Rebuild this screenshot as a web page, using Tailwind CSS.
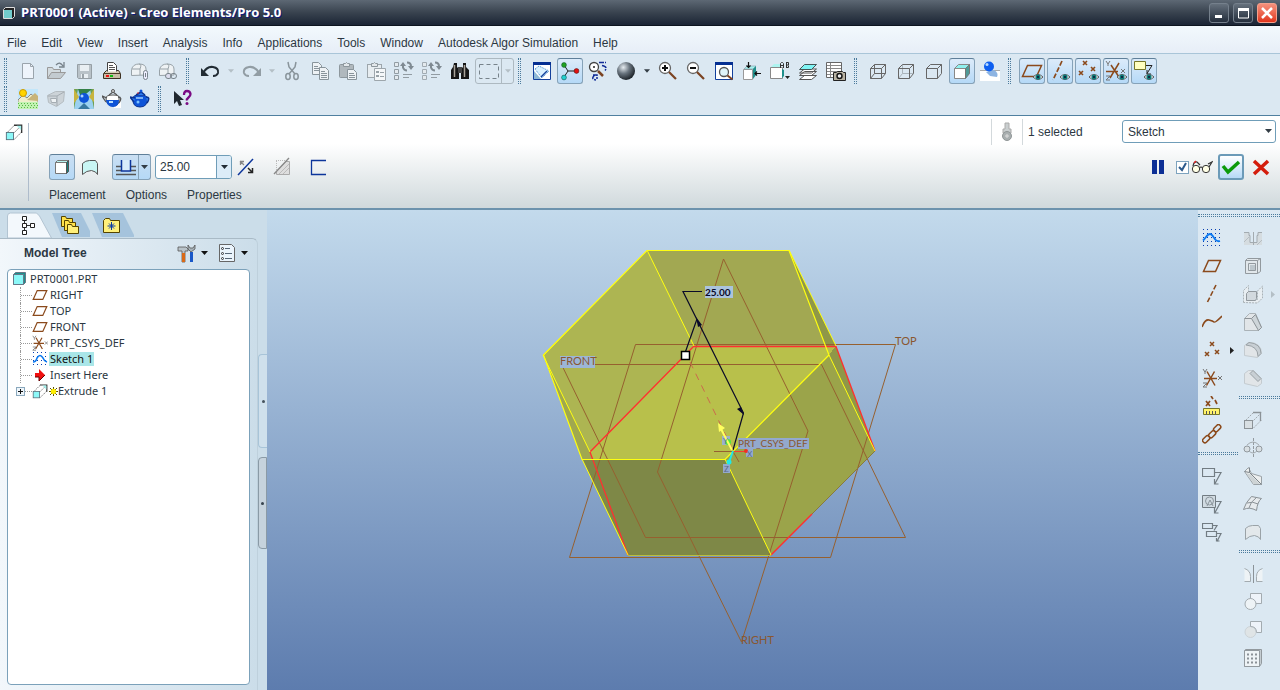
<!DOCTYPE html>
<html lang="en">
  <head>
    <meta charset="UTF-8" />
    <meta name="viewport" content="width=device-width, initial-scale=1.0" />
    <title>PRT0001 (Active) - Creo Elements/Pro 5.0</title>
    <script src="https://cdn.jsdelivr.net/npm/@tailwindcss/browser@4"></script>
  </head>
  <body class="flex h-screen flex-col overflow-hidden bg-[#dbe8f2] font-['Liberation_Sans',Arial,sans-serif] text-xs text-[#2b3742]">
    <!-- Shared icons -->
    <svg class="hidden">
      <symbol id="down" viewBox="0 0 7 4"><path d="M0 0h7L3.500 4z" fill="currentColor" /></symbol>
      <symbol id="eye" viewBox="0 0 10 6">
        <path d="M0 3Q5 -2 10 3Q5 8 0 3" fill="#fff" stroke="#555" />
        <circle cx="5" cy="3" r="2.600" fill="#0d7a78" /><circle cx="5" cy="3" r="1" fill="#113" />
      </symbol>
      <symbol id="plane" viewBox="0 0 20 20"><path d="M6.500 4.500h12l-5 11h-12z" fill="none" stroke="#8b4a1c" stroke-width="1.500" /></symbol>
      <symbol id="csys" viewBox="0 0 20 20">
        <path d="M2 10.500h13M5 3.500l8 14M12.500 3.500l-8 14" stroke="#8b4a1c" stroke-width="1.500" />
        <path d="M1 1l2 3 2-3M3 4v2M16 8l4 4M20 8l-4 4M1 15h4l-4 4h4" fill="none" stroke="#777" />
      </symbol>
      <symbol id="sketch" viewBox="0 0 20 20">
        <path d="M1 1.500h18M1 5.500h18M1 9.500h18M1 13.500h18M1 17.500h18" stroke="#0a3fb0" stroke-dasharray="1 3" />
        <path d="M1 12.500C4 10 5 6 8 6c4 0 4 9 10 7" fill="none" stroke="#0a78f0" stroke-width="1.800" />
      </symbol>
      <symbol id="extrude" viewBox="0 0 20 20">
        <path d="M2.500 10.500l8-8M10.500 18l8-8M10.500 10.500l8-8" stroke="#666" stroke-dasharray="2 1" />
        <path d="M10 2.500h8.500V11" fill="none" stroke="#333" stroke-width="1.500" />
        <path d="M13 3h5v5z" fill="#a5f2ee" />
        <rect x="1.500" y="10.500" width="8" height="8" fill="#8cf8f8" stroke="#55707c" />
      </symbol>
      <symbol id="points" viewBox="0 0 20 20">
        <path d="M8 2l4 4M12 2l-4 4M3 12l4 4M7 12l-4 4M13 10l4 4M17 10l-4 4" stroke="#8b4a1c" stroke-width="1.500" />
      </symbol>
    </svg>

    <!-- Title bar -->
    <header class="flex h-[26px] shrink-0 items-center border-b border-[#0d1520] bg-linear-to-b from-[#5d6874] via-[#39434f] to-[#1b2535] px-[3px]">
      <svg class="size-3" viewBox="0 0 12 12"><path d="M.5 2.500L2.500.5h9v9l-2 2h-9z" fill="#222" stroke="#ddd" /><path d="M1 3h8v8H1z" fill="#72cccc" /></svg>
      <h1 class="ml-[6px] font-['Open_Sans',sans-serif] text-[13px] font-bold text-white [text-shadow:1px_1px_0_#101a80]">PRT0001 (Active) - Creo Elements/Pro 5.0</h1>
      <div class="ml-auto flex gap-1">
        <button aria-label="Minimize" class="grid size-5 place-items-center rounded-[3px] border border-[#75808c] bg-linear-to-b from-[#66717d] to-[#252f3d]"><svg class="size-4" viewBox="0 0 16 16"><path d="M4 10h7v3H4z" fill="#fff" /></svg></button>
        <button aria-label="Maximize" class="grid size-5 place-items-center rounded-[3px] border border-[#75808c] bg-linear-to-b from-[#66717d] to-[#252f3d]"><svg class="size-4" viewBox="0 0 16 16"><path d="M3.500 3v10h10V3" fill="none" stroke="#fff" /><path d="M3 3h11v3H3z" fill="#fff" /></svg></button>
        <button aria-label="Close" class="grid size-5 place-items-center rounded-[3px] border border-[#f4a08c] bg-linear-to-b from-[#f5907c] to-[#e03218]"><svg class="size-4" viewBox="0 0 16 16"><path d="M3 3l10 10M13 3L3 13" stroke="#fff" stroke-width="2.500" /></svg></button>
      </div>
    </header>

    <!-- Menu bar -->
    <nav class="flex h-7 shrink-0 items-center gap-[15px] border-b border-[#a9c5d8] bg-linear-to-b from-[#f2f9fd] to-[#e7eef7] px-[7px] pt-[6px]">
      <button>File</button>
      <button>Edit</button>
      <button>View</button>
      <button>Insert</button>
      <button>Analysis</button>
      <button>Info</button>
      <button>Applications</button>
      <button>Tools</button>
      <button>Window</button>
      <button>Autodesk Algor Simulation</button>
      <button>Help</button>
    </nav>

    <!-- Toolbars -->
    <div class="h-[62px] shrink-0 border-b border-[#4f80a0] bg-[#dbe8f2] pt-[3px]">
      <div class="flex h-7 items-center">
        <div class="flex w-[14px] justify-start pl-1"><i class="h-[26px] w-[3px] border-x border-dotted border-[#4a7a9c]"></i></div>
        <button aria-label="New" class="grid size-7 place-items-center"><svg class="size-5" viewBox="0 0 20 20"><path d="M4.500 2.500h8l3 3v12h-11z" fill="#eef4fb" stroke="#9aa4ac" /><path d="M12.500 2.500v3h3" fill="none" stroke="#9aa4ac" /></svg></button>
        <button aria-label="Open" class="grid size-7 place-items-center"><svg class="size-5" viewBox="0 0 20 20"><path d="M1.500 17.500v-11h5l1 2h7v3" fill="#d2dade" stroke="#999" /><path d="M1.500 17.500l4-6h14l-5 6z" fill="#c3cbd0" stroke="#999" /><path d="M10 4Q14 0 17 5M18 1v5h-5" fill="none" stroke="#77828a" stroke-width="1.300" /></svg></button>
        <button aria-label="Save" class="grid size-7 place-items-center"><svg class="size-5" viewBox="0 0 20 20"><path d="M3.500 3.500h14v14h-13l-1-1z" fill="#b9c2c8" stroke="#969fa5" /><path d="M6 4h9v6H6zM7 13h7v4H7z" fill="#e9eff3" /><path d="M8 13h2v4H8z" fill="#9aa3a9" /></svg></button>
        <button aria-label="Print" class="grid size-7 place-items-center"><svg class="size-5" viewBox="0 0 20 20"><path d="M1.500 12.500l3-3h12l2 3v5h-17z" fill="#d8cdb6" stroke="#3c3022" /><path d="M5.500 10.500v-9h6l3 3v6" fill="#fff" stroke="#444" /><path d="M7 4.500h4M7 6.500h6M7 8.500h6" stroke="#555" /><path d="M2 12h16v5H2z" fill="#c9bca4" /><path d="M2 12.500h16" stroke="#4d3b26" /><path d="M4 14h3v2H4z" fill="#e11" /><path d="M8 14h3v2H8z" fill="#1b1" /></svg></button>
        <button aria-label="Send as attachment" class="grid size-7 place-items-center"><svg class="size-5" viewBox="0 0 20 20"><path d="M1.500 14.500v-6Q3 3 9 3q7 0 7 5v6z" fill="#eef2f4" stroke="#98a2a8" /><path d="M2 8h8v6M10 8Q12 3 9 3" fill="none" stroke="#98a2a8" /><rect x="13.500" y="9.500" width="4" height="9" rx="2" fill="#eef" stroke="#78838a" /><path d="M15.500 12v4" stroke="#78838a" /></svg></button>
        <button aria-label="Send as link" class="grid size-7 place-items-center"><svg class="size-5" viewBox="0 0 20 20"><path d="M1.500 14.500v-6Q3 3 9 3q7 0 7 5v6z" fill="#eef2f4" stroke="#98a2a8" /><path d="M2 8h8v6M10 8Q12 3 9 3" fill="none" stroke="#98a2a8" /><rect x="7.500" y="12.500" width="6" height="5" rx="2.500" fill="#dde" stroke="#78838a" /><rect x="12.500" y="12.500" width="6" height="5" rx="2.500" fill="none" stroke="#78838a" /></svg></button>
        <div class="flex w-[14px] justify-start pl-1"><i class="h-[26px] w-[3px] border-x border-dotted border-[#4a7a9c]"></i></div>
        <button aria-label="Undo" class="grid size-7 place-items-center"><svg class="size-5" viewBox="0 0 20 20"><path d="M3 12Q7 5 13 6q6 1 5 6-1 3-5 3" fill="none" stroke="#222c34" stroke-width="2" /><path d="M1 7v8h8z" fill="#222c34" /></svg></button>
        <button aria-label="Undo list" class="grid h-7 w-[14px] place-items-center text-[#b4bfc6]"><svg class="h-1 w-[6px]"><use href="#down" /></svg></button>
        <button aria-label="Redo" class="grid size-7 place-items-center"><svg class="size-5" viewBox="0 0 20 20"><path d="M17 12Q13 5 7 6q-6 1-5 6 1 3 5 3" fill="none" stroke="#929da4" stroke-width="2" /><path d="M19 7v8h-8z" fill="#929da4" /></svg></button>
        <button aria-label="Redo list" class="grid h-7 w-3 place-items-center text-[#b4bfc6]"><svg class="h-1 w-[6px]"><use href="#down" /></svg></button>
        <button aria-label="Cut" class="grid size-7 place-items-center"><svg class="size-5" viewBox="0 0 20 20"><path d="M6 1l1 5 6 7M14 1l-1 5-6 7" fill="none" stroke="#89949b" stroke-width="1.500" /><ellipse cx="6" cy="15.500" rx="2.200" ry="3" fill="none" stroke="#89949b" stroke-width="1.500" /><ellipse cx="14" cy="15.500" rx="2.200" ry="3" fill="none" stroke="#89949b" stroke-width="1.500" /></svg></button>
        <button aria-label="Copy" class="grid size-7 place-items-center"><svg class="size-5" viewBox="0 0 20 20"><path d="M2.500 1.500h6l3 3v9h-9z" fill="#eef2f5" stroke="#89949b" /><path d="M4 5.500h4M4 7.500h6M4 9.500h6" stroke="#89949b" /><path d="M9.500 6.500h6l3 3v9h-9z" fill="#eef2f5" stroke="#89949b" /><path d="M11 10.500h4M11 12.500h6M11 14.500h6M11 16.500h6" stroke="#89949b" /></svg></button>
        <button aria-label="Paste" class="grid size-7 place-items-center"><svg class="size-5" viewBox="0 0 20 20"><rect x="1.500" y="3.500" width="14" height="13" rx="1" fill="#b0b8bd" stroke="#8d979d" /><path d="M5.500 5.500v-3h2l1-1 1 1h2v3z" fill="#e3e8eb" stroke="#8d979d" /><path d="M9.500 8.500h6l3 3v7h-9z" fill="#eef2f5" stroke="#89949b" /><path d="M11 12.500h5M11 14.500h6M11 16.500h6" stroke="#89949b" /></svg></button>
        <button aria-label="Paste special" class="grid size-7 place-items-center"><svg class="size-5" viewBox="0 0 20 20"><rect x="1.500" y="3.500" width="14" height="13" fill="#e7edf1" stroke="#9da6ac" /><path d="M5.500 5.500v-3h2l1-1 1 1h2v3z" fill="#e3e8eb" stroke="#8d979d" /><path d="M8.500 7.500h11v12h-11z" fill="#f4f7f9" stroke="#9da6ac" /><path d="M10 10h3v2h-3zM10 14h3v2h-3z" fill="#98a2a8" /><path d="M14 11.500h4M14 15.500h4" stroke="#98a2a8" /></svg></button>
        <button aria-label="Regenerate" class="grid size-7 place-items-center"><svg class="size-5" viewBox="0 0 20 20"><path d="M.5 1.500h4v4h-4zM.5 8.500h4v4h-4zM.5 14.500h4v4h-4z" fill="#e4eaee" stroke="#929ca3" /><path d="M9 4.500v2q1 3 4 3M13 1.500q4 0 4 4" fill="none" stroke="#7f8a92" stroke-width="2" /><path d="M6 5h6L9 1zM14 5h6l-3 4z" fill="#7f8a92" /><path d="M9 13.500h9M9 16.500h6" stroke="#929ca3" /></svg></button>
        <button aria-label="Regenerate manager" class="grid size-7 place-items-center"><svg class="size-5" viewBox="0 0 20 20"><path d="M.5 1.500h4v4h-4zM.5 8.500h4v4h-4zM.5 14.500h4v4h-4z" fill="#e4eaee" stroke="#a1abb2" /><path d="M9 4.500v2q1 3 4 3M13 1.500q4 0 4 4" fill="none" stroke="#7f8a92" stroke-width="2" /><path d="M6 5h6L9 1zM14 5h6l-3 4z" fill="#7f8a92" /><path d="M9 13.500h9M9 16.500h6" stroke="#929ca3" /></svg></button>
        <button aria-label="Find" class="grid size-7 place-items-center"><svg class="size-5" viewBox="0 0 20 20"><path d="M4 2h3v4l2 2v10H1V9l2-3zM13 2h3v4l3 3v9h-8V8l2-2z" fill="#161616" /><path d="M8 6h4v6H8z" fill="#444" /><path d="M4.500 4v12M14.500 4v12" stroke="#aaa49a" stroke-width="1.500" /></svg></button>
        <div class="ml-px flex h-[26px] w-[39px] rounded-[3px] border border-[#adb9c1]">
          <button aria-label="Select region" class="grid flex-1 place-items-center border-r border-[#adb9c1]"><svg class="h-[15px] w-5" viewBox="0 0 20 15"><path d="M.5 .5h19v14H.5z" fill="none" stroke="#77838b" stroke-dasharray="4 3" /></svg></button>
          <button aria-label="Select filter" class="grid w-[11px] place-items-center text-[#b4bfc6]"><svg class="h-1 w-[6px]"><use href="#down" /></svg></button>
        </div>
        <div class="flex w-[14px] justify-start pl-1"><i class="h-[26px] w-[3px] border-x border-dotted border-[#4a7a9c]"></i></div>
        <button aria-label="Repaint" class="grid size-7 place-items-center"><svg class="size-5" viewBox="0 0 20 20"><path d="M1.500 1.500h17v17h-17z" fill="#fff" stroke="#12409c" /><path d="M1 1h18v3H1z" fill="#052f92" /><path d="M3 8l4-3 10 5-7 7z" fill="#d9f1ff" stroke="#3b86c8" stroke-dasharray="1 1" /><path d="M9 16l6-6" stroke="#12409c" stroke-width="1.500" /><path d="M2 10l7 8H2z" fill="#8fb9d6" /></svg></button>
        <button aria-label="Spin center" aria-pressed="true" class="m-px grid size-[26px] place-items-center rounded-[3px] border border-[#86a2b8] border-t-[#5f7f99] bg-linear-to-b from-[#dcebfa] to-[#b5d9f7]"><svg class="size-5" viewBox="0 0 20 20"><path d="M4 4l4 6-4 6M8 10h8" fill="none" stroke="#222" /><circle cx="4" cy="4" r="2.400" fill="#21a321" stroke="#153" stroke-width=".6" /><circle cx="16.500" cy="10" r="2.400" fill="#e21212" stroke="#511" stroke-width=".6" /><circle cx="4" cy="16.500" r="2.400" fill="#22d0d0" stroke="#155" stroke-width=".6" /></svg></button>
        <button aria-label="Orient mode" class="grid size-7 place-items-center"><svg class="size-5" viewBox="0 0 20 20"><circle cx="6" cy="6" r="4.500" fill="#fff" stroke="#444" stroke-width="1.300" /><circle cx="6" cy="6" r="1" fill="#222" /><path d="M10 10l5 5" stroke="#7b4322" stroke-width="2.500" /><path d="M11 1.500h7M14 4.500q6 1 3 5M7 14q-5 4 1 5M5 14h4v4" fill="none" stroke="#102b96" stroke-width="1.500" stroke-dasharray="5 1" /></svg></button>
        <button aria-label="Appearance gallery" class="grid size-7 place-items-center"><svg class="size-5" viewBox="0 0 20 20"><defs><radialGradient id="ball" cx=".35" cy=".3" r=".7"><stop stop-color="#e6ecf1" /><stop offset=".5" stop-color="#68737d" /><stop offset="1" stop-color="#20272d" /></radialGradient></defs><circle cx="10" cy="10" r="9" fill="url(#ball)" /></svg></button>
        <button aria-label="Appearance list" class="grid h-7 w-[14px] place-items-center text-[#333d45]"><svg class="h-1 w-[6px]"><use href="#down" /></svg></button>
        <button aria-label="Zoom in" class="grid size-7 place-items-center"><svg class="size-5" viewBox="0 0 20 20"><circle cx="7" cy="7" r="5.500" fill="#fff" stroke="#666" stroke-width="1.300" /><path d="M4 7h6M7 4v6" stroke="#111" stroke-width="2" /><path d="M11 11l7 7" stroke="#7b4322" stroke-width="2.200" /></svg></button>
        <button aria-label="Zoom out" class="grid size-7 place-items-center"><svg class="size-5" viewBox="0 0 20 20"><circle cx="7" cy="7" r="5.500" fill="#fff" stroke="#666" stroke-width="1.300" /><path d="M4 7h6" stroke="#111" stroke-width="2" /><path d="M11 11l7 7" stroke="#7b4322" stroke-width="2.200" /></svg></button>
        <button aria-label="Refit" class="grid size-7 place-items-center"><svg class="size-5" viewBox="0 0 20 20"><path d="M1.500 1.500h17v17h-17z" fill="#fff" stroke="#12409c" /><path d="M1 1h18v3H1z" fill="#052f92" /><circle cx="10" cy="11" r="4.500" fill="#dff4fa" stroke="#555" stroke-width="1.300" /><path d="M13.500 14.500l5 4" stroke="#7b4322" stroke-width="2" /></svg></button>
        <button aria-label="Reorient view" class="grid size-7 place-items-center"><svg class="size-5" viewBox="0 0 20 20"><path d="M1.500 8.500h9v10h-9z" fill="#fff" stroke="#999" /><path d="M2 8l3-3h9l-3 3z" fill="#a5f2ee" stroke="#89a" stroke-width=".6" /><path d="M11 8l3-3v9l-3 4z" fill="#1f8f8b" /><path d="M6.500 1v6M4.500 4.500l2 2 2-2M19 12.500h-6M15 10.500l-2 2 2 2" fill="none" stroke="#111" stroke-width="1.200" /></svg></button>
        <button aria-label="Saved view list" class="grid size-7 place-items-center"><svg class="size-5" viewBox="0 0 20 20"><path d="M.5 6.500h12v11H.5z" fill="#fff" stroke="#888" /><path d="M1 6l3-3h6v3z" fill="#aef4f0" /><path d="M12 8l2 1v6l-2 2z" fill="#1f8f8b" /><path d="M10.500 7V2.500l1-1h1l1 1V7M10.500 4.500h3M16.500 1v5.500M16 1.500h2.500v2.500h-2M18.500 4.500v2H16" fill="none" stroke="#333" /><path d="M15 15h5l-2.500 3z" fill="#222" /></svg></button>
        <button aria-label="Layers" class="grid size-7 place-items-center"><svg class="size-5" viewBox="0 0 20 20"><path d="M1.500 18.500l5-4h12l-5 4zM1.500 14.500l5-4h12l-5 4zM1.500 12l5-4h12l-5 4z" fill="#fff" stroke="#555" /><path d="M1.500 8.500l5-5h12l-5 5z" fill="#7ff4f4" stroke="#455" /></svg></button>
        <button aria-label="View manager" class="grid size-7 place-items-center"><svg class="size-5" viewBox="0 0 20 20"><path d="M.5 1.500h15v15H.5z" fill="#fff" stroke="#666" /><path d="M1 4.500h14M1 7.500h14M1 10.500h14M1 13.500h14M4.500 2v14" stroke="#888" /><path d="M7.500 11.500h3l1-1h5l1 1h2v8h-12z" fill="#b8b2a2" stroke="#222" /><circle cx="13.500" cy="15" r="2.500" fill="#eee" stroke="#111" stroke-width="1.400" /></svg></button>
        <div class="flex w-[14px] justify-start pl-1"><i class="h-[26px] w-[3px] border-x border-dotted border-[#4a7a9c]"></i></div>
        <button aria-label="Wireframe" class="grid size-7 place-items-center"><svg class="size-5" viewBox="0 0 20 20"><path d="M2.500 7.500h11v10h-11zM6.500 3.500h11v9h-11zM2.500 7.500l4-4M13.500 7.500l4-4M2.500 17.500l4-5M13.500 17.500l4-5" fill="none" stroke="#666" /></svg></button>
        <button aria-label="Hidden line" class="grid size-7 place-items-center"><svg class="size-5" viewBox="0 0 20 20"><path d="M6.500 3.500v9h11M2.500 17.500l4-5" fill="none" stroke="#aab4bb" /><path d="M2.500 7.500h11v10h-11zM2.500 7.500l4-4h11v9l-4 5M13.500 7.500l4-4" fill="none" stroke="#666" /></svg></button>
        <button aria-label="No hidden" class="grid size-7 place-items-center"><svg class="size-5" viewBox="0 0 20 20"><path d="M2.500 7.500h11v10h-11zM2.500 7.500l4-4h11v9l-4 5M13.500 7.500l4-4" fill="none" stroke="#666" /></svg></button>
        <button aria-label="Shading" aria-pressed="true" class="m-px grid size-[26px] place-items-center rounded-[3px] border border-[#86a2b8] border-t-[#5f7f99] bg-linear-to-b from-[#dcebfa] to-[#b5d9f7]"><svg class="size-5" viewBox="0 0 20 20"><path d="M2.500 7.500h11v10h-11z" fill="#fff" stroke="#888" /><path d="M2.500 7.500l4-4h11l-4 4z" fill="#8ff0ee" stroke="#888" /><path d="M13.500 7.500l4-4v9l-4 5z" fill="#4f9a96" stroke="#777" /></svg></button>
        <button aria-label="Enhanced realism" class="grid size-7 place-items-center"><svg class="size-5" viewBox="0 0 20 20"><path d="M0 9h20v11H0z" fill="#fff" /><path d="M0 9.500h20" stroke="#aaa" /><path d="M6 11l8-2q5 3 3 7l-7-1z" fill="#8db4e2" /><circle cx="9" cy="5.500" r="5" fill="#0d5ff0" /><circle cx="7" cy="3.500" r="1.500" fill="#b7dcff" /></svg></button>
        <div class="flex w-[14px] justify-start pl-1"><i class="h-[26px] w-[3px] border-x border-dotted border-[#4a7a9c]"></i></div>
        <button aria-label="Plane display" aria-pressed="true" class="m-px grid size-[26px] place-items-center rounded-[3px] border border-[#86a2b8] border-t-[#5f7f99] bg-linear-to-b from-[#dcebfa] to-[#b5d9f7]"><svg class="size-[22px]" viewBox="0 0 22 22"><path d="M6.500 5.500h14l-5 11h-14z" fill="none" stroke="#8b4a1c" stroke-width="1.500" /><use href="#eye" x="12" y="14" width="10" height="6" /></svg></button>
        <button aria-label="Axis display" aria-pressed="true" class="m-px grid size-[26px] place-items-center rounded-[3px] border border-[#86a2b8] border-t-[#5f7f99] bg-linear-to-b from-[#dcebfa] to-[#b5d9f7]"><svg class="size-[22px]" viewBox="0 0 22 22"><path d="M13 1L4 20" stroke="#8b4a1c" stroke-width="1.700" stroke-dasharray="5 2" /><use href="#eye" x="11" y="14" width="10" height="6" /></svg></button>
        <button aria-label="Point display" aria-pressed="true" class="m-px grid size-[26px] place-items-center rounded-[3px] border border-[#86a2b8] border-t-[#5f7f99] bg-linear-to-b from-[#dcebfa] to-[#b5d9f7]"><svg class="size-[22px]" viewBox="0 0 22 22"><path d="M6 1l4 4M10 1L6 5M2 11l4 4M6 11l-4 4M14 7l4 4M18 7l-4 4" stroke="#8b4a1c" stroke-width="1.600" /><use href="#eye" x="12" y="14" width="10" height="6" /></svg></button>
        <button aria-label="Csys display" aria-pressed="true" class="m-px grid size-[26px] place-items-center rounded-[3px] border border-[#86a2b8] border-t-[#5f7f99] bg-linear-to-b from-[#dcebfa] to-[#b5d9f7]"><svg class="size-[22px]" viewBox="0 0 22 22"><path d="M1 11.500h12M6 5l8 12M14 3L5 18" stroke="#8b4a1c" stroke-width="1.500" /><path d="M1 1l2 3 2-3M3 4v2M16 9l4 4M20 9l-4 4M1 16h4l-4 4h4" fill="none" stroke="#777" /><use href="#eye" x="12" y="14" width="10" height="6" /></svg></button>
        <button aria-label="Annotation display" aria-pressed="true" class="m-px grid size-[26px] place-items-center rounded-[3px] border border-[#86a2b8] border-t-[#5f7f99] bg-linear-to-b from-[#dcebfa] to-[#b5d9f7]"><svg class="size-[22px]" viewBox="0 0 22 22"><path d="M1.500 1.500h11v8h-11z" fill="#ffffc0" stroke="#77772a" /><path d="M13 5.500h6l-5 8M14 10v4h4" fill="none" stroke="#222" /><use href="#eye" x="11" y="14" width="10" height="6" /></svg></button>
      </div>
      <div class="flex h-7 items-center">
        <div class="flex w-[14px] justify-start pl-1"><i class="h-[26px] w-[3px] border-x border-dotted border-[#4a7a9c]"></i></div>
        <button aria-label="Scene" class="grid size-7 place-items-center"><svg class="size-5" viewBox="0 0 20 20"><path d="M0 0h20v20H0z" fill="#c2e6fa" /><path d="M0 11l5-5 4 3 4-4 7 6v3H0z" fill="#eeeecc" stroke="#888" /><path d="M9 11l8-7 3 3v5z" fill="#c8b478" /><circle cx="5" cy="4" r="3.500" fill="#ffd400" stroke="#c90" /><path d="M0 13h20v7H0z" fill="#c2f2b2" /><path d="M0 14.500h20M1 16.500h19M0 18.500h20" stroke="#58b848" stroke-dasharray="1 2" /></svg></button>
        <button aria-label="Room" class="grid size-7 place-items-center"><svg class="size-5" viewBox="0 0 20 20"><path d="M1.500 6.500l8-4h9l-1 10-7 5-8-4z" fill="#ccd3d8" stroke="#b4bcc1" /><path d="M2 7h9l7-4M11 7v10" fill="none" stroke="#a4acb2" /><path d="M4.500 9.500h6v4h-5z" fill="#eef2f4" stroke="#a4acb2" /></svg></button>
        <button aria-label="Environment" class="grid size-7 place-items-center"><svg class="size-5" viewBox="0 0 20 20"><path d="M0 0h20v20H0z" fill="#6ea052" /><path d="M0 20L4 0h12l4 20z" fill="#9bd0f0" /><path d="M4 0h14L7 9z" fill="#348048" /><path d="M0 0l5 8-5 6zM20 0l-5 8 5 5z" fill="#c7b43f" /><circle cx="10" cy="9" r="5" fill="#0e54d8" /><circle cx="8" cy="7" r="1.500" fill="#a9d2ff" /><path d="M4 20l6-6 6 6z" fill="#3778a0" /></svg></button>
        <button aria-label="Render setup" class="grid size-7 place-items-center"><svg class="size-5" viewBox="0 0 20 20"><path d="M12 10h7v9h-7z" fill="#fff" /><path d="M4 9q0-3 7-3t6 3q1 8-6 8T4 9z" fill="#fff" stroke="#555" /><path d="M4 11h13q0 7-6 7t-7-7z" fill="#0e54d8" /><path d="M4 13L0 7l5 2M16 8q5 0 1 6M7 6l4-3 4 3" fill="none" stroke="#555" stroke-width="1.300" /><circle cx="11" cy="2" r="1.500" fill="#ddd" stroke="#555" /><path d="M7 13h4" stroke="#b6deff" stroke-width="2" /></svg></button>
        <button aria-label="Render window" class="grid size-7 place-items-center"><svg class="size-5" viewBox="0 0 20 20"><path d="M3 9q0-3 7-3t7 3q1 9-7 9T3 9z" fill="#0e54d8" stroke="#0a3290" /><path d="M4 13L0 8l5 1M16 8q5 0 1 6M6 6l5-3 4 3" fill="#2e7bee" stroke="#0a3290" stroke-width="1.500" /><circle cx="11" cy="2" r="1.500" fill="#0e54d8" /><path d="M6 9h7" stroke="#9fd0ff" stroke-width="1.500" /><circle cx="8" cy="13" r="1.500" fill="#7cc2ff" /><circle cx="8" cy="4" r=".8" fill="#e22" /></svg></button>
        <div class="flex w-[14px] justify-start pl-1"><i class="h-[26px] w-[3px] border-x border-dotted border-[#4a7a9c]"></i></div>
        <button aria-label="Context help" class="grid size-7 place-items-center"><svg class="size-5" viewBox="0 0 20 20"><path d="M2 2v13l3-3 2 5 3-1-2-5h4z" fill="#20282f" /><path d="M12 6q0-4 3-4t3.500 3q0 2-2 3.500t-1.500 3" fill="none" stroke="#7a0b84" stroke-width="2.300" /><circle cx="15" cy="14.500" r="1.500" fill="#7a0b84" /></svg></button>
      </div>
    </div>

    <!-- Extrude dashboard -->
    <section class="flex h-[94px] shrink-0 border-b-2 border-[#6d93ad] bg-linear-to-b from-white from-30% to-[#d0d9dc]">
      <div class="my-[7px] flex w-[29px] shrink-0 justify-center border-r border-[#aebccb]"><svg class="size-[18px]"><use href="#extrude" /></svg></div>
      <div class="flex flex-1 flex-col">
        <div class="flex h-[31px] items-center justify-end pr-1">
          <div class="grid h-[26px] w-8 place-items-center border-x border-[#d3d9dc]"><svg class="size-5" viewBox="0 0 20 20"><path d="M8 1h4v6h2v4H6V7h2z" fill="#c9cecf" stroke="#aaa" /><circle cx="10" cy="14" r="4.500" fill="#a9afb0" stroke="#909697" /><path d="M8 14h4M10 12v4" stroke="#ddd" /></svg></div>
          <span class="ml-[5px] w-[94px]">1 selected</span>
          <div class="relative w-[154px]">
            <select aria-label="Selection filter" class="block h-[23px] w-full appearance-none rounded-[3px] border border-[#6f9db8] bg-white px-[5px]"><option>Sketch</option></select>
            <svg class="pointer-events-none absolute top-[9px] right-1 h-1 w-[7px] text-[#333d45]"><use href="#down" /></svg>
          </div>
        </div>
        <div class="flex h-[40px] items-center pr-[6px] pl-5">
          <button aria-label="Solid" aria-pressed="true" class="grid size-[26px] place-items-center rounded-[3px] border border-[#86a2b8] border-t-[#5f7f99] bg-linear-to-b from-[#cadff2] to-[#b5d9f7]"><svg class="size-5" viewBox="0 0 20 20"><path d="M3.500 5.500h11v11h-11z" fill="#fff" stroke="#777" /><path d="M3.500 5.500l2-2h11l-2 2z" fill="#b8f4f1" stroke="#777" /><path d="M14.500 5.500l2-2v11l-2 2z" fill="#197d79" stroke="#555" /></svg></button>
          <button aria-label="Surface" class="ml-px grid size-7 place-items-center"><svg class="size-5" viewBox="0 0 20 20"><path d="M2.500 17.500v-11q3-3 7-3h6l2 3v11q-1-3-6-4-5 0-9 4z" fill="#c9f6f4" stroke="#555" /></svg></button>
          <div class="ml-2 flex h-[26px] w-[39px] rounded-[3px] border border-[#86a2b8] border-t-[#5f7f99] bg-linear-to-b from-[#cadff2] to-[#b5d9f7]">
            <button aria-label="Blind depth" class="grid flex-1 place-items-center border-r border-[#86a2b8]"><svg class="size-5" viewBox="0 0 20 20"><path d="M0 9.500h5M15 9.500h5M0 13.500h5M15 13.500h5M0 17.500h20" stroke="#555" stroke-width="1.500" /><path d="M5.500 3v11h9V3" fill="#d8ebfa" stroke="#0c359b" stroke-width="1.500" /></svg></button>
            <button aria-label="Depth options" class="grid w-[11px] place-items-center text-[#333d45]"><svg class="h-1 w-[7px]"><use href="#down" /></svg></button>
          </div>
          <div class="ml-1 flex h-[24px] w-[77px] overflow-hidden rounded-[3px] border border-[#6f9db8] bg-white">
            <input aria-label="Depth value" value="25.00" class="w-0 flex-1 px-1 outline-none" />
            <button aria-label="Recent values" class="grid w-[15px] place-items-center border-l border-[#6f9db8] bg-[#dcecf8] text-[#222c34]"><svg class="h-1 w-[7px]"><use href="#down" /></svg></button>
          </div>
          <button aria-label="Flip direction" class="grid size-7 place-items-center"><svg class="size-5" viewBox="0 0 20 20"><path d="M2 18L17 2" stroke="#0c359b" stroke-width="1.500" /><path d="M4.500 4v4M4 4.500h4M4 4l4 4" stroke="#888" stroke-width="1.300" /><path d="M12 11l4 4M16.500 11v4.500H12" fill="none" stroke="#222" stroke-width="1.500" /></svg></button>
          <button aria-label="Remove material" class="ml-2 grid size-7 place-items-center"><svg class="size-5" viewBox="0 0 20 20"><path d="M4.500 17.500v-3L14 4.500h3.500v13z" fill="#dedede" stroke="#aaa" /><path d="M4 3.500h9M4.500 4v9" stroke="#bbb" stroke-dasharray="1 1" /><path d="M7 17l10-10M11 17l6-6" stroke="#bbb" /><path d="M2 17L17 1" stroke="#888" stroke-width="1.300" /></svg></button>
          <button aria-label="Thicken" class="ml-2 grid size-7 place-items-center"><svg class="size-5" viewBox="0 0 20 20"><path d="M18 3.500H3.500v14H18" fill="none" stroke="#0c359b" stroke-width="1.300" /></svg></button>
          <div class="ml-auto flex items-center">
            <button aria-label="Pause" class="mr-2 grid size-5 place-items-center"><svg class="size-4" viewBox="0 0 16 16"><path d="M2 1h5v14H2zM9 1h5v14H9z" fill="#0c2f95" /></svg></button>
            <label class="mr-[5px] flex items-center gap-[2px]">
              <span class="relative grid size-[13px] place-items-center">
                <input type="checkbox" checked aria-label="Preview" class="size-[13px] appearance-none border border-[#7da3be] bg-white" />
                <svg class="pointer-events-none absolute size-[11px]" viewBox="0 0 11 11"><path d="M2 5l3 3 4-7" fill="none" stroke="#2c5a8c" stroke-width="2" /></svg>
              </span>
              <svg class="h-[14px] w-[22px]" viewBox="0 0 22 14"><circle cx="5" cy="9" r="3.700" fill="#ffffe6" stroke="#333" /><circle cx="15" cy="9" r="3.700" fill="#ffffe6" stroke="#333" /><path d="M8.500 8q1.500-2 3 0M2 6q1-5 4-4l3 3M18 7l3-5-4 2" fill="none" stroke="#333" stroke-width="1.200" /><path d="M3 3l2-2" stroke="#d22" stroke-width="1.500" /></svg>
            </label>
            <button aria-label="Accept" class="grid size-[26px] place-items-center rounded-[3px] border-2 border-[#6b9ab8] bg-linear-to-b from-white to-[#b5d9f7]"><svg class="size-5" viewBox="0 0 20 20"><path d="M2 9l5 6L18 5" fill="none" stroke="#0b9a0b" stroke-width="3.500" /></svg></button>
            <button aria-label="Cancel" class="ml-1 grid size-[26px] place-items-center"><svg class="size-5" viewBox="0 0 20 20"><path d="M3 4l14 13M17 4L3 17" stroke="#d41d0c" stroke-width="3.500" /></svg></button>
          </div>
        </div>
        <div class="flex gap-[20px] pl-5">
          <button>Placement</button>
          <button>Options</button>
          <button>Properties</button>
        </div>
      </div>
    </section>

    <main class="flex min-h-0 flex-1">
      <!-- Navigator -->
      <aside class="flex w-[267px] shrink-0 bg-[#cbdde9]">
        <div class="flex min-w-0 flex-1 flex-col">
          <div class="flex h-7 shrink-0 items-end">
            <button aria-label="Model tree tab" class="h-[26px]"><svg class="h-[26px] w-[52px]" viewBox="0 0 52 26"><path d="M7.500 26V4q0-3 3-3h26l3 3 12 22z" fill="#f3f8fc" stroke="#b2c4d2" /><path d="M24.500 7v12M24.500 13.500h7" stroke="#333" /><path d="M22.500 4.500h4v4h-4zM22.500 11.500h4v4h-4zM30.500 11.500h4v4h-4zM22.500 18.500h4v4h-4z" fill="#fff" stroke="#222" /></svg></button>
            <button aria-label="Folder browser tab" class="h-[26px]"><svg class="h-[26px] w-10" viewBox="0 0 40 26"><path d="M0 1h29l9 18v6H10z" fill="#a5c3dc" /><path d="M9.500 14.500v-10h4l1 2h6v8z" fill="#ffe24a" stroke="#554400" /><path d="M12.500 18.500v-10h4l1 2h6v8z" fill="#ffe24a" stroke="#554400" /><path d="M15.500 21.500v-9h4l1 2h6v7z" fill="#fff07a" stroke="#554400" /></svg></button>
            <button aria-label="Favorites tab" class="h-[26px]"><svg class="h-[26px] w-11" viewBox="0 0 44 26"><path d="M0 1h31l11 22v2H10z" fill="#a5c3dc" /><path d="M11.500 20.500v-12l2-2h4l1 2h9v12z" fill="#fff07a" stroke="#554400" /><path d="M19.500 10v8M15.500 14h8M17 11.500l5 5M22 11.500l-5 5" stroke="#0a3aa5" /></svg></button>
          </div>
          <div class="flex min-h-0 flex-1 flex-col rounded-tr-md border-t border-r border-[#a9bac6] border-r-[#bed0dc] bg-linear-to-r from-[#f2f7fb] to-[#cbdde9] pr-[7px] pb-[5px] pl-[7px]">
            <div class="flex h-[30px] shrink-0 items-center pr-[2px] pb-[2px] pl-[17px]">
              <h2 class="font-bold">Model Tree</h2>
              <button aria-label="Settings" class="ml-auto flex items-center gap-[5px]"><svg class="size-[19px]" viewBox="0 0 19 19"><path d="M1 3h8l2 2v2H8v11H5V7H1z" fill="#b9c3c9" stroke="#555" stroke-width=".8" /><path d="M5 9h3v9H5z" fill="#d96a18" /><path d="M13 8h3v10h-3z" fill="#1857c8" /><path d="M11 1v4l3 3 4-3V1l-2 3h-3z" fill="#a7b2b9" stroke="#555" stroke-width=".8" /></svg><svg class="h-1 w-[7px] text-[#111]"><use href="#down" /></svg></button>
              <button aria-label="Show" class="ml-[10px] flex items-center gap-[5px]"><svg class="size-[18px]" viewBox="0 0 18 18"><path d="M1.500.5h12l3 3v14h-15z" fill="#eaf4fc" stroke="#666" /><path d="M7 4.500h5M7 9.500h7M7 14.500h7" stroke="#567" /><circle cx="4.500" cy="4.500" r="1" fill="none" stroke="#333" /><circle cx="4.500" cy="9.500" r="1" fill="none" stroke="#333" /><circle cx="4.500" cy="14.500" r="1" fill="none" stroke="#333" /></svg><svg class="h-1 w-[7px] text-[#111]"><use href="#down" /></svg></button>
            </div>
            <div class="min-h-0 flex-1 rounded-[4px] border border-[#7ba1ba] bg-white pt-px pl-[5px] font-['Noto_Sans',sans-serif] text-[11px]">
              <div class="flex h-4 items-center gap-[3px]"><svg class="size-[14px]" viewBox="0 0 14 14"><path d="M.5 2.500l2-2h10v10l-2 2H.5z" fill="#1b8f8b" stroke="#678" /><path d="M.5 2.500h10v10H.5z" fill="#8cf8f8" stroke="#678" /></svg>PRT0001.PRT</div>
              <ul class="ml-[7px]">
                <li class="flex h-4 items-center border-l border-dotted border-[#999]"><i class="w-[11px] border-t border-dotted border-[#999]"></i><svg class="mr-px size-4"><use href="#plane" /></svg><span class="px-px">RIGHT</span></li>
                <li class="flex h-4 items-center border-l border-dotted border-[#999]"><i class="w-[11px] border-t border-dotted border-[#999]"></i><svg class="mr-px size-4"><use href="#plane" /></svg><span class="px-px">TOP</span></li>
                <li class="flex h-4 items-center border-l border-dotted border-[#999]"><i class="w-[11px] border-t border-dotted border-[#999]"></i><svg class="mr-px size-4"><use href="#plane" /></svg><span class="px-px">FRONT</span></li>
                <li class="flex h-4 items-center border-l border-dotted border-[#999]"><i class="w-[11px] border-t border-dotted border-[#999]"></i><svg class="mr-px size-4"><use href="#csys" /></svg><span class="px-px">PRT_CSYS_DEF</span></li>
                <li class="flex h-4 items-center border-l border-dotted border-[#999]"><i class="w-[11px] border-t border-dotted border-[#999]"></i><svg class="mr-px size-4" viewBox="0 0 16 16"><path d="M1 1.500h14M1 5.500h14M1 9.500h14M1 13.500h14" stroke="#0a3fb0" stroke-dasharray="1 3" /><path d="M1 11q3 0 4-4 3-5 6 0 1 3 4 4" fill="none" stroke="#0a78f0" stroke-width="1.500" /></svg><span class="bg-[#a9e6e8] px-px text-[#111]">Sketch 1</span></li>
                <li class="flex h-4 items-center border-l border-dotted border-[#999]"><i class="w-[11px] border-t border-dotted border-[#999]"></i><svg class="mr-px size-4" viewBox="0 0 16 16"><path d="M3 6h4V2l6 6-6 6v-4H3z" fill="#f01010" /><path d="M3 10h4v4l6-6" fill="none" stroke="#600" /></svg><span class="px-px">Insert Here</span></li>
                <li class="-ml-1 flex h-4 items-center">
                  <button aria-label="Expand" class="size-[9px] border border-[#8aa8bd] bg-[#eef5fa]"><svg class="size-[7px]" viewBox="0 0 7 7"><path d="M1 3.500h5M3.500 1v5" stroke="#111" /></svg></button>
                  <i class="w-[7px] border-t border-dotted border-[#999]"></i><svg class="mr-px size-4"><use href="#extrude" /></svg>
                  <svg class="size-[9px]" viewBox="0 0 9 9"><path d="M4.500 0v9M0 4.500h9M1 1l7 7M8 1L1 8" stroke="#554d00" /><circle cx="4.500" cy="4.500" r="2.700" fill="#ffee00" /></svg><span>Extrude 1</span>
                </li>
              </ul>
            </div>
          </div>
        </div>
        <!-- Sash handles -->
        <div class="flex w-[9px] shrink-0 flex-col gap-[9px] pt-[144px]">
          <button aria-label="Collapse navigator" class="grid h-[94px] place-items-center rounded-l-sm border border-r-0 border-[#a8c4d8] bg-[#cfe0ec]"><i class="size-[3px] rounded-full bg-[#46535e]"></i></button>
          <button aria-label="Resize navigator" class="grid h-[92px] place-items-center rounded-l-sm border border-[#8a9aa6] bg-[#c6d3dd]"><i class="size-[3px] rounded-full bg-[#36434e]"></i></button>
        </div>
      </aside>

      <!-- Graphics area -->
      <div class="min-w-0 flex-1 bg-linear-to-b from-[#c3daec] to-[#5d7cae]">
        <svg class="size-full font-['Lato',sans-serif] text-[11px]" viewBox="267 210 931 480">
          <!-- Solid faces -->
          <g shape-rendering="crispEdges">
            <path d="M647 250L694 346L590 452L543 355z" fill="#adb552" />
            <path d="M647 250H789L836 346H694z" fill="#a2a852" />
            <path d="M543 355L590 452L628 555L582 459z" fill="#a0a84f" />
            <path d="M789 250L836 346L875 451L829 355z" fill="#8f9748" />
            <path d="M694 346H836L829 355L725 459H592L590 452z" fill="#b8c04b" />
            <path d="M829 355L875 451L771 555L725 459z" fill="#9ba44a" />
            <path d="M582 459H725L771 555H628z" fill="#7e8847" />
          </g>
          <!-- Datum planes -->
          <g fill="none" stroke="#96602f">
            <path d="M635.500 344.500H895.500L830.500 557.500H569.500z" />
            <path d="M561.500 364.500H821.500L905.500 537.500H645.500z" />
            <path d="M723.500 259L808 431L741.500 642L657.500 472z" />
          </g>
          <path d="M694 346.500H836L875 451M628 555L590 452L694 346" fill="none" stroke="#ff3030" stroke-width="1.300" />
          <path d="M875 451L812 514" stroke="#8a7a3c" />
          <path d="M812 514L771 555" stroke="#ff3030" stroke-width="1.500" />
          <g fill="none" stroke="#ffff10">
            <path d="M647 250.500H789L829 355L725 459.500H582L543.500 355z" stroke-width="1.200" />
            <path d="M647 250L694 346M789 250L836 346M829 355L875 451M725 459L771 555M582 459L628 555M543 355L590 452" />
            <path d="M628 555.500H771" stroke="#b9bf3c" />
          </g>
          <!-- Depth dimension -->
          <path d="M690 362L733 450" stroke="#cb6a4c" stroke-dasharray="7 6" />
          <path d="M702 291.500H683L743.500 413L733 450M697 319L685 353" fill="none" stroke="#0a0a28" stroke-width="1.200" />
          <path d="M696 317l6 8-4 2zM744 415l-7-6 4-2z" fill="#0a0a28" />
          <rect x="681.500" y="351.500" width="8" height="8" fill="#fff" stroke="#000" stroke-width="1.500" />
          <!-- Coordinate system -->
          <rect x="722" y="436" width="8" height="9" fill="#9cb1cc" />
          <rect x="738" y="438" width="71" height="11" fill="#93a9cd" />
          <rect x="746" y="449" width="7" height="8" fill="#93a9cd" />
          <rect x="723" y="464" width="7" height="9" fill="#93a9cd" />
          <path d="M714 451.500H733L739 462" fill="none" stroke="#96602f" />
          <path d="M733 451.500H746" stroke="#f04030" />
          <path d="M733 451L729 462" stroke="#20e8e8" stroke-width="2" />
          <circle cx="728" cy="442" r="3" fill="#50e840" />
          <path d="M732 450L721 429" stroke="#ffff60" stroke-width="2" />
          <path d="M718 423l7 5-6 4z" fill="#ffff60" />
          <circle cx="746" cy="451" r="2" fill="#f03020" />
          <circle cx="729" cy="462" r="2.500" fill="#20e8e8" />
          <rect x="560" y="356" width="35" height="12" fill="#9cb6d6" />
          <rect x="705" y="286" width="28" height="12" fill="#abc3dc" />
          <g fill="#8a5730">
            <text x="560" y="365">FRONT</text>
            <text x="895" y="345">TOP</text>
            <text x="741" y="644">RIGHT</text>
            <text x="738" y="447" class="text-[10px]">PRT_CSYS_DEF</text>
            <text x="705" y="296" fill="#0a0a28" class="text-[10px] font-bold">25.00</text>
            <text x="723" y="444" fill="#5c7898" class="text-[8px]">Y</text>
            <text x="747" y="457" fill="#5c6888" class="text-[8px]">X</text>
            <text x="724" y="472" fill="#5c6888" class="text-[8px]">Z</text>
          </g>
        </svg>
      </div>

      <!-- Feature toolbars -->
      <aside class="flex w-[82px] shrink-0 gap-px bg-[#dbe8f2]">
        <div class="flex w-10 flex-col">
          <div class="h-[14px] shrink-0 pt-1"><i class="block h-[3px] border-y border-dotted border-[#4a7a9c]"></i></div>
          <button aria-label="Sketch tool" class="grid size-7 shrink-0 place-items-center"><svg class="size-5"><use href="#sketch" /></svg></button>
          <button aria-label="Datum plane" class="grid size-7 shrink-0 place-items-center"><svg class="size-5"><use href="#plane" /></svg></button>
          <button aria-label="Datum axis" class="grid size-7 shrink-0 place-items-center"><svg class="size-5" viewBox="0 0 20 20"><path d="M14 1L5 19" stroke="#8b4a1c" stroke-width="1.600" stroke-dasharray="5 2" /></svg></button>
          <button aria-label="Datum curve" class="grid size-7 shrink-0 place-items-center"><svg class="size-5" viewBox="0 0 20 20"><path d="M0 15Q3 7 7 8t5 2 8-6" fill="none" stroke="#8b4a1c" stroke-width="1.600" /></svg></button>
          <div class="flex shrink-0 items-center"><button aria-label="Datum point" class="grid size-7 place-items-center"><svg class="size-5"><use href="#points" /></svg></button><button aria-label="More datum points" class="ml-1"><svg class="h-[7px] w-1" viewBox="0 0 4 7"><path d="M0 0v7l4-3.500z" fill="#222" /></svg></button></div>
          <button aria-label="Datum coordinate system" class="grid size-7 shrink-0 place-items-center"><svg class="size-5"><use href="#csys" /></svg></button>
          <button aria-label="Analysis feature" class="grid size-7 shrink-0 place-items-center"><svg class="size-5" viewBox="0 0 20 20"><path d="M4 5l4 5M8 5l-4 5M9 0l2 3M13 4l2 4" stroke="#8b4a1c" stroke-width="1.700" /><path d="M1.500 12.500h16v6h-16z" fill="#fff36b" stroke="#77772a" /><path d="M4.500 15v3M7.500 15v3M10.500 15v3M13.500 15v3" stroke="#555" /></svg></button>
          <button aria-label="Reference feature" class="grid size-7 shrink-0 place-items-center"><svg class="size-5" viewBox="0 0 20 20"><g fill="none" stroke="#8b4a1c" stroke-width="1.500"><rect x="-4" y="-2" width="8" height="4.500" rx="2" transform="translate(4 15) rotate(-45)" /><rect x="-4" y="-2" width="8" height="4.500" rx="2" transform="translate(10 10) rotate(-45)" /><rect x="-4" y="-2" width="8" height="4.500" rx="2" transform="translate(15 4) rotate(-45)" /></g></svg></button>
          <div class="h-[14px] shrink-0 pt-1"><i class="block h-[3px] border-y border-dotted border-[#4a7a9c]"></i></div>
          <button aria-label="Annotation feature" class="grid size-7 shrink-0 place-items-center"><svg class="size-5" viewBox="0 0 20 20"><path d="M.5 2.500h12v8H.5zM13 6.500h6l-6 11M12.500 13v5h4" fill="none" stroke="#727c83" stroke-width="1.200" /></svg></button>
          <button aria-label="Propagate annotation" class="grid size-7 shrink-0 place-items-center"><svg class="size-5" viewBox="0 0 20 20"><path d="M.5 1.500h13v12H.5z" fill="#d1dbe2" stroke="#727c83" /><path d="M14 7.500h5l-6 11M12.500 14v5h4" fill="none" stroke="#727c83" stroke-width="1.200" /><circle cx="7.500" cy="7" r="4" fill="none" stroke="#8b959c" /><path d="M5 12l3-6 3 6" fill="none" stroke="#8b959c" /></svg></button>
          <button aria-label="Annotation element" class="grid size-7 shrink-0 place-items-center"><svg class="size-5" viewBox="0 0 20 20"><path d="M.5 1.500h10v5H.5zM4.500 9.500h10v5h-10zM11 3.500h4l-3 5M15 11.500h4l-4 8M14.500 16v3h3" fill="none" stroke="#727c83" stroke-width="1.200" /></svg></button>
        </div>
        <div class="flex flex-1 flex-col">
          <div class="h-[14px] shrink-0 pt-1"><i class="block h-[3px] border-y border-dotted border-[#4a7a9c]"></i></div>
          <button aria-label="Hole" class="grid size-7 shrink-0 place-items-center"><svg class="size-5" viewBox="0 0 20 20"><path d="M1 4h4l2 3v8h7V7l2-3h3v13H1z" fill="#d5dce0" /><path d="M1 4.500h5v3h1v7h7v-7h1v-3h4M10.500 4v13" fill="none" stroke="#a3abb0" /><path d="M1 14l5-5M14 17l5-5" stroke="#b5bdc2" /></svg></button>
          <button aria-label="Shell" class="grid size-7 shrink-0 place-items-center"><svg class="size-5" viewBox="0 0 20 20"><path d="M2.500 4.500l2-2h13v13l-3 2h-12zM2.500 4.500h12v13M14.500 4.500l3-2M5.500 7.500h7v7h-7z" fill="#e1e7eb" stroke="#92999e" /><path d="M7 9h5v5H7z" fill="#bcc6cc" /></svg></button>
          <div class="flex shrink-0 items-center"><button aria-label="Rib" class="grid size-7 place-items-center"><svg class="size-5" viewBox="0 0 20 20"><path d="M.5 18.500v-12l5-5v7l-2 2v6l11-1V7l5-5v12l-5 5z" fill="#e8eef2" stroke="#aab2b7" stroke-dasharray="2 1" /><path d="M3.500 9.500l2-2h8v7l-1 2h-9z" fill="#d2d9de" stroke="#92999e" /></svg></button><button aria-label="More ribs" class="ml-1"><svg class="h-[7px] w-1" viewBox="0 0 4 7"><path d="M0 0v7l4-3.500z" fill="#b4bfc6" /></svg></button></div>
          <button aria-label="Draft" class="grid size-7 shrink-0 place-items-center"><svg class="size-5" viewBox="0 0 20 20"><path d="M1.500 6.500l5-5h6l6 14-3 3h-14z" fill="#e1e5e8" stroke="#aab2b7" /><path d="M1.500 6.500h7l7 12 3-3-6-13-4 4" fill="#ced5d9" stroke="#8b9297" /></svg></button>
          <button aria-label="Round" class="grid size-7 shrink-0 place-items-center"><svg class="size-5" viewBox="0 0 20 20"><path d="M1.500 5.500l4-3q13 0 13 11l-4 4-13-2z" fill="#e1e5e8" stroke="#c4cbd0" /><path d="M6 2.500q12 1 12 11l-3 3Q15 6 3 5z" fill="#c8cfd4" stroke="#9aa2a7" /></svg></button>
          <button aria-label="Chamfer" class="grid size-7 shrink-0 place-items-center"><svg class="size-5" viewBox="0 0 20 20"><path d="M1.500 5.500l4-3h5l8 8v5l-4 3-13-3z" fill="#e1e5e8" stroke="#c4cbd0" /><path d="M10 2.500l8 8-3 3-8-8z" fill="#c8cfd4" stroke="#9aa2a7" /></svg></button>
          <div class="h-[14px] shrink-0 pt-1"><i class="block h-[3px] border-y border-dotted border-[#4a7a9c]"></i></div>
          <button aria-label="Extrude" class="grid size-7 shrink-0 place-items-center"><svg class="size-5" viewBox="0 0 20 20"><path d="M2.500 10.500l8-8M10.500 18l8-8M10.500 10.500l8-8" stroke="#a3abb0" stroke-dasharray="2 1" /><path d="M10 2.500h7.500V11" fill="none" stroke="#8b9297" stroke-width="1.300" /><rect x="1.500" y="10.500" width="8" height="8" fill="#d8dfe3" stroke="#8b9297" /></svg></button>
          <button aria-label="Revolve" class="grid size-7 shrink-0 place-items-center"><svg class="size-5" viewBox="0 0 20 20"><path d="M10.500 0v20" stroke="#92999e" stroke-dasharray="3 1" /><circle cx="4" cy="11" r="3" fill="#d8dfe3" stroke="#92999e" /><circle cx="16" cy="11" r="3" fill="#d8dfe3" stroke="#92999e" /><path d="M4 7q6-6 12 0M6 13q4 4 8 0" fill="none" stroke="#a3abb0" /></svg></button>
          <button aria-label="Variable section sweep" class="grid size-7 shrink-0 place-items-center"><svg class="size-5" viewBox="0 0 20 20"><path d="M1.500 5.500l4-4 3 6 10 3v8h-8z" fill="#eceeee" stroke="#9aa2a7" /><path d="M1.500 5.500l5 1v-5M6.500 6.500l12 12" fill="none" stroke="#7d858b" /><path d="M3 7l8 11h6L7 8z" fill="#cdd3d5" /></svg></button>
          <button aria-label="Boundary blend" class="grid size-7 shrink-0 place-items-center"><svg class="size-5" viewBox="0 0 20 20"><path d="M.5 15.500q2-7 8-13l10 2q-4 3-5 12-7-4-13-1z" fill="#e6eaed" stroke="#8b9297" /><path d="M4 9q6-2 11 1M6 14q1-6 8-11" fill="none" stroke="#8b9297" /></svg></button>
          <button aria-label="Style" class="grid size-7 shrink-0 place-items-center"><svg class="size-5" viewBox="0 0 20 20"><path d="M2.500 17.500v-11q3-3 7-3h6l2 3v11q-1-3-6-4-5 0-9 4z" fill="#e3e8eb" stroke="#9aa2a7" /></svg></button>
          <div class="h-[14px] shrink-0 pt-1"><i class="block h-[3px] border-y border-dotted border-[#4a7a9c]"></i></div>
          <button aria-label="Mirror" class="grid size-7 shrink-0 place-items-center"><svg class="size-5" viewBox="0 0 20 20"><path d="M10.500 1v18" stroke="#8b9297" /><path d="M1.500 4.500q6 2 6 8v5h-6M19.500 4.500q-6 2-6 8v5h6" fill="#eef3f6" stroke="#a3abb0" /></svg></button>
          <button aria-label="Merge" class="grid size-7 shrink-0 place-items-center"><svg class="size-5" viewBox="0 0 20 20"><path d="M7.500 1.500h11v10h-11z" fill="#eef3f9" stroke="#a3abb0" /><circle cx="7.500" cy="12" r="5.500" fill="#eef3f6" stroke="#a3abb0" /></svg></button>
          <button aria-label="Trim" class="grid size-7 shrink-0 place-items-center"><svg class="size-5" viewBox="0 0 20 20"><circle cx="7.500" cy="12" r="5.500" fill="#dfe4e6" stroke="#ccd3d7" /><path d="M7.500 1.500h11v11h-5q0-6-6-6z" fill="#eef3f9" stroke="#a3abb0" /></svg></button>
          <button aria-label="Pattern" class="grid size-7 shrink-0 place-items-center"><svg class="size-5" viewBox="0 0 20 20"><path d="M1.500 3.500l1-2h16v14l-2 3h-15z" fill="#c5cdd2" stroke="#92999e" /><path d="M1.500 2.500h15v16h-15z" fill="#eef3f6" stroke="#92999e" /><path d="M4 6.500h10M4 10.500h10M4 14.500h10" stroke="#8b9297" stroke-width="2" stroke-dasharray="2 2" /></svg></button>
        </div>
      </aside>
    </main>
  </body>
</html>
